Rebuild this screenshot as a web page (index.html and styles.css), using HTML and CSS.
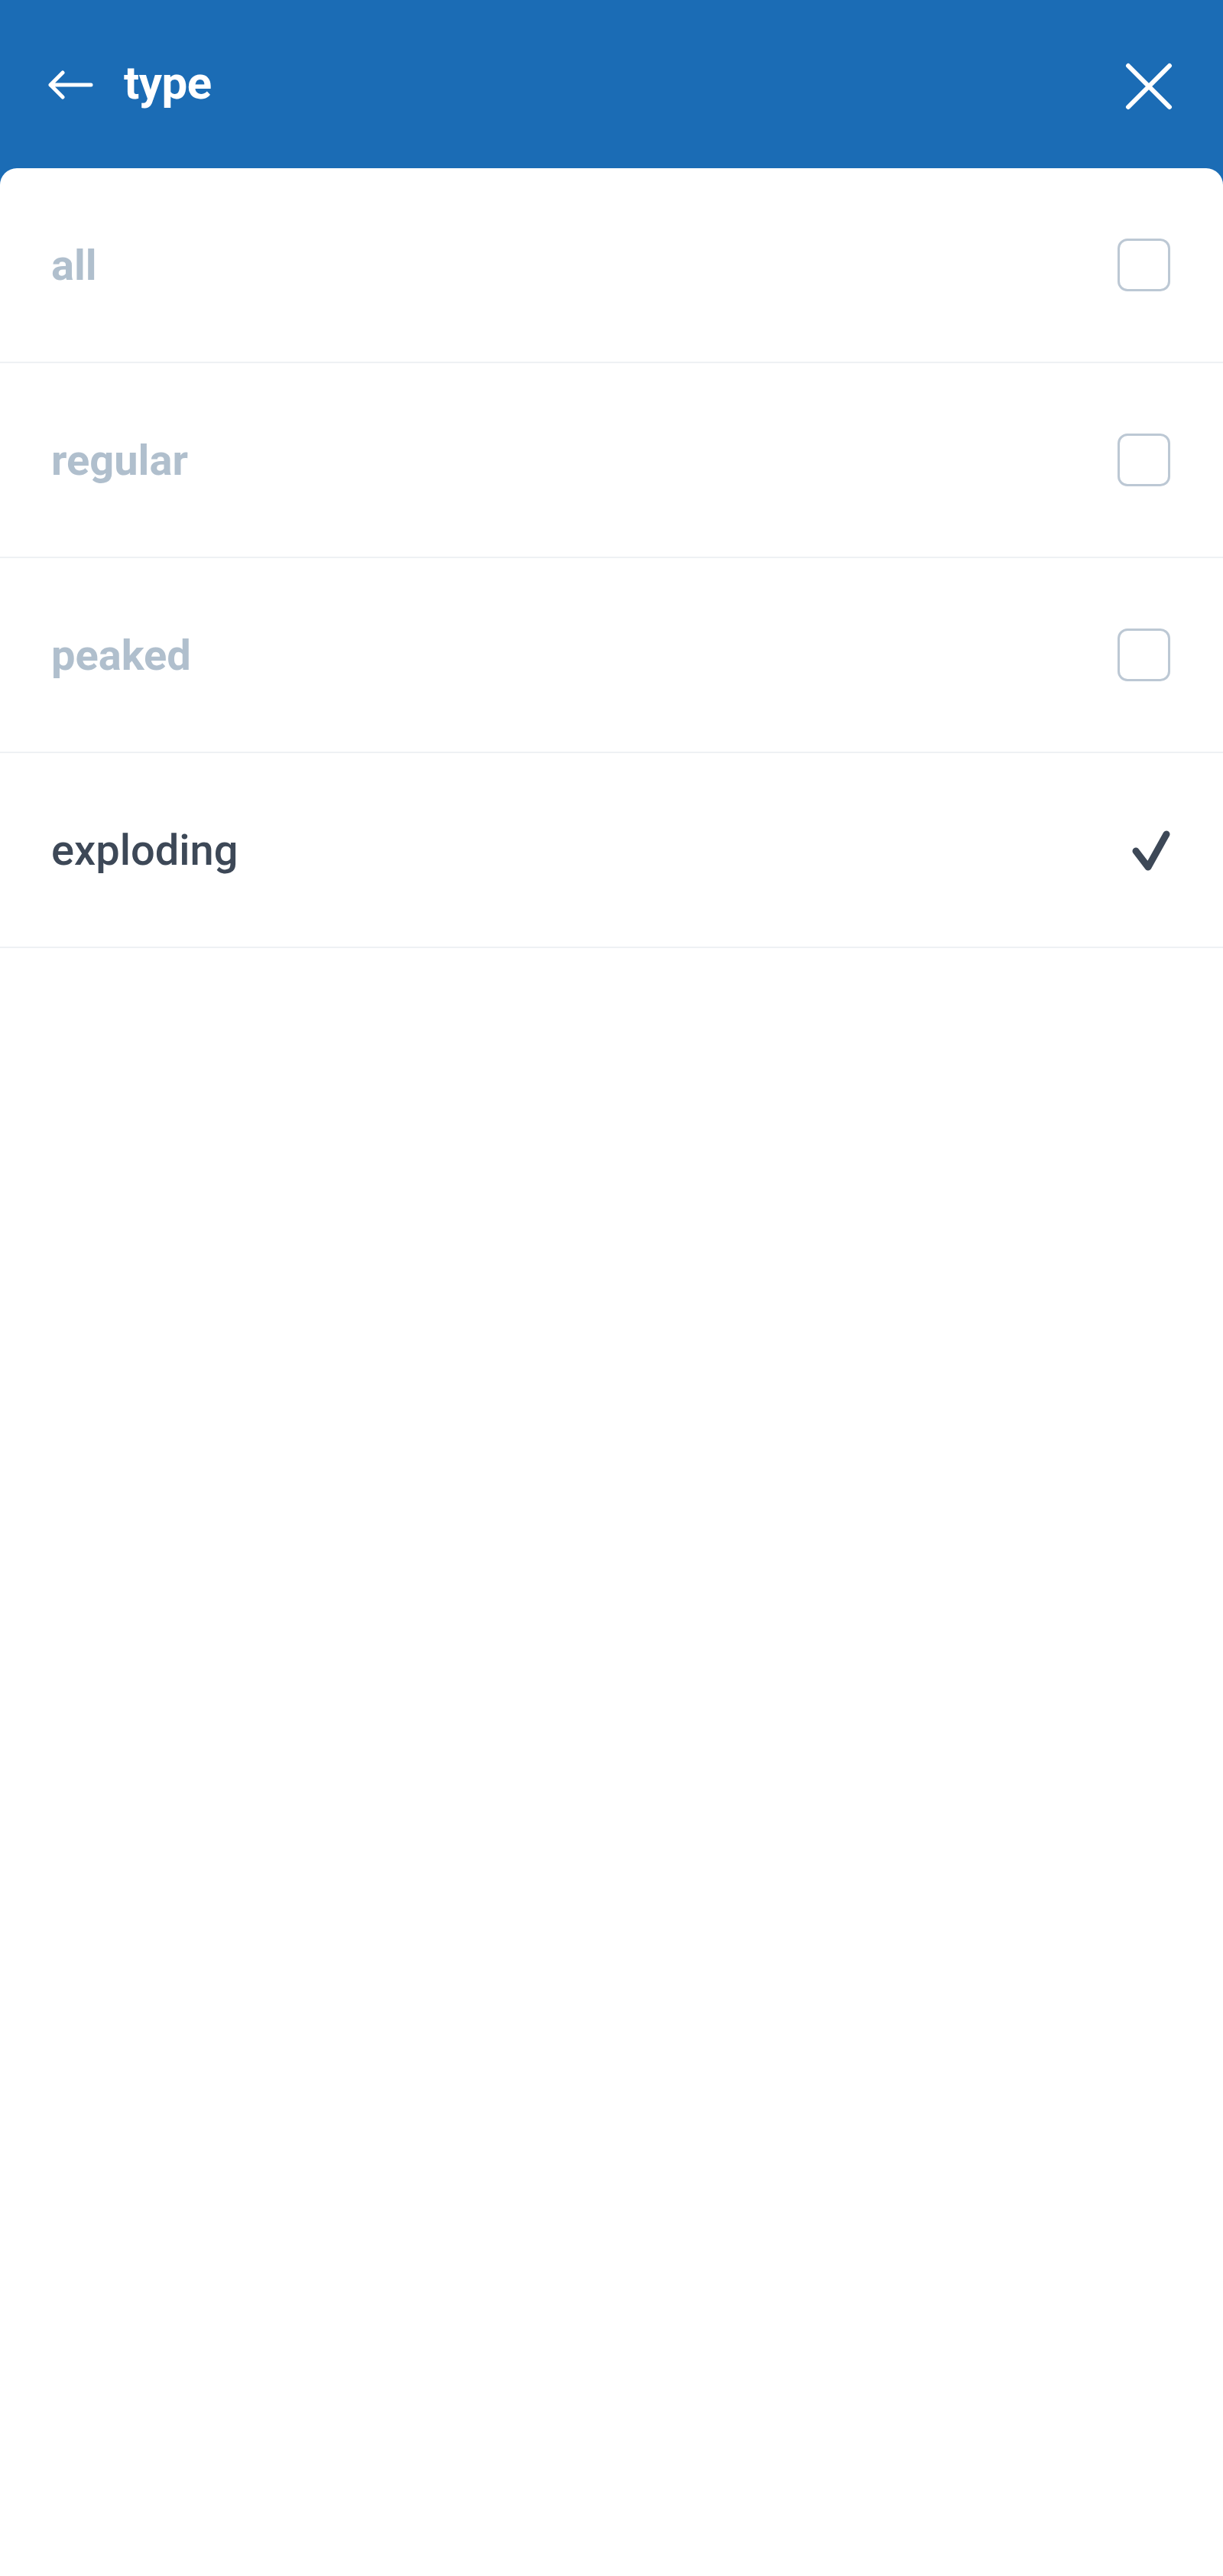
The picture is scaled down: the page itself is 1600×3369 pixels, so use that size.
FILE: index.html
```html
<!DOCTYPE html>
<html lang="en">

<head>
    <meta charset="UTF-8">
    <meta name="viewport" content="width=device-width, initial-scale=1.0">
    <title>type</title>
    <link rel="stylesheet" href="styles.css">
</head>

<body>

    <div class="top">
        <div class="top-left">
            <span class="back">
                <svg width="60" height="38" viewBox="0 0 60 38">
                    <path d="M57 19H4M20 3L4 19l16 16" fill="none" stroke="#fff" stroke-width="5" stroke-linecap="round" stroke-linejoin="round"/>
                </svg>
            </span>
            <h1 class="title">type</h1>
        </div>
        <span class="close">
            <svg width="64" height="64" viewBox="0 0 64 64">
                <path d="M5 5L59 59M59 5L5 59" fill="none" stroke="#fff" stroke-width="6" stroke-linecap="round"/>
            </svg>
        </span>
    </div>

    <div class="main">
        <ul class="list">
            <li class="item">
                <span class="label">all</span>
                <span class="box"></span>
            </li>
            <li class="item">
                <span class="label">regular</span>
                <span class="box"></span>
            </li>
            <li class="item">
                <span class="label">peaked</span>
                <span class="box"></span>
            </li>
            <li class="item checked">
                <span class="label">exploding</span>
                <span class="tick">
                    <svg width="50" height="54" viewBox="0 0 50 54">
                        <path d="M5 27L21 48L45 5" fill="none" stroke="#3d4857" stroke-width="9" stroke-linecap="round" stroke-linejoin="round"/>
                    </svg>
                </span>
            </li>
        </ul>
    </div>

</body>

</html>
```

FILE: styles.css
```css
* {
    padding: 0;
    margin: 0;
    box-sizing: border-box;
}

body {
    background: #1b6cb5;
    font-family: Roboto, "Liberation Sans", sans-serif;
}

.top {
    height: 220px;
    display: flex;
    align-items: center;
    justify-content: space-between;
    padding: 0 65px 0 62px;
    color: #fff;
}

.top-left {
    display: flex;
    align-items: center;
    gap: 40px;
}

.back svg,
.close svg {
    display: block;
}

.back {
    margin-top: 2px;
}

.title {
    font-size: 60px;
    font-weight: 700;
    letter-spacing: -0.5px;
    line-height: 1;
    margin-top: -2px;
}

.close {
    margin-top: 6px;
}

.main {
    background: #fff;
    border-radius: 22px 22px 0 0;
    min-height: 3149px;
}

.list {
    list-style: none;
}

.item {
    height: 255px;
    display: flex;
    align-items: center;
    justify-content: space-between;
    padding: 0 69px 0 67px;
    border-bottom: 2px solid #eef1f4;
}

.label {
    font-size: 56px;
    font-weight: 700;
    color: #b0bfcd;
}

.item.checked .label {
    font-weight: 500;
    color: #3d4857;
}

.box {
    width: 69px;
    height: 69px;
    border: 3px solid #bcc8d4;
    border-radius: 13px;
}

.tick {
    margin-top: 2px;
}

.tick svg {
    display: block;
}
```
